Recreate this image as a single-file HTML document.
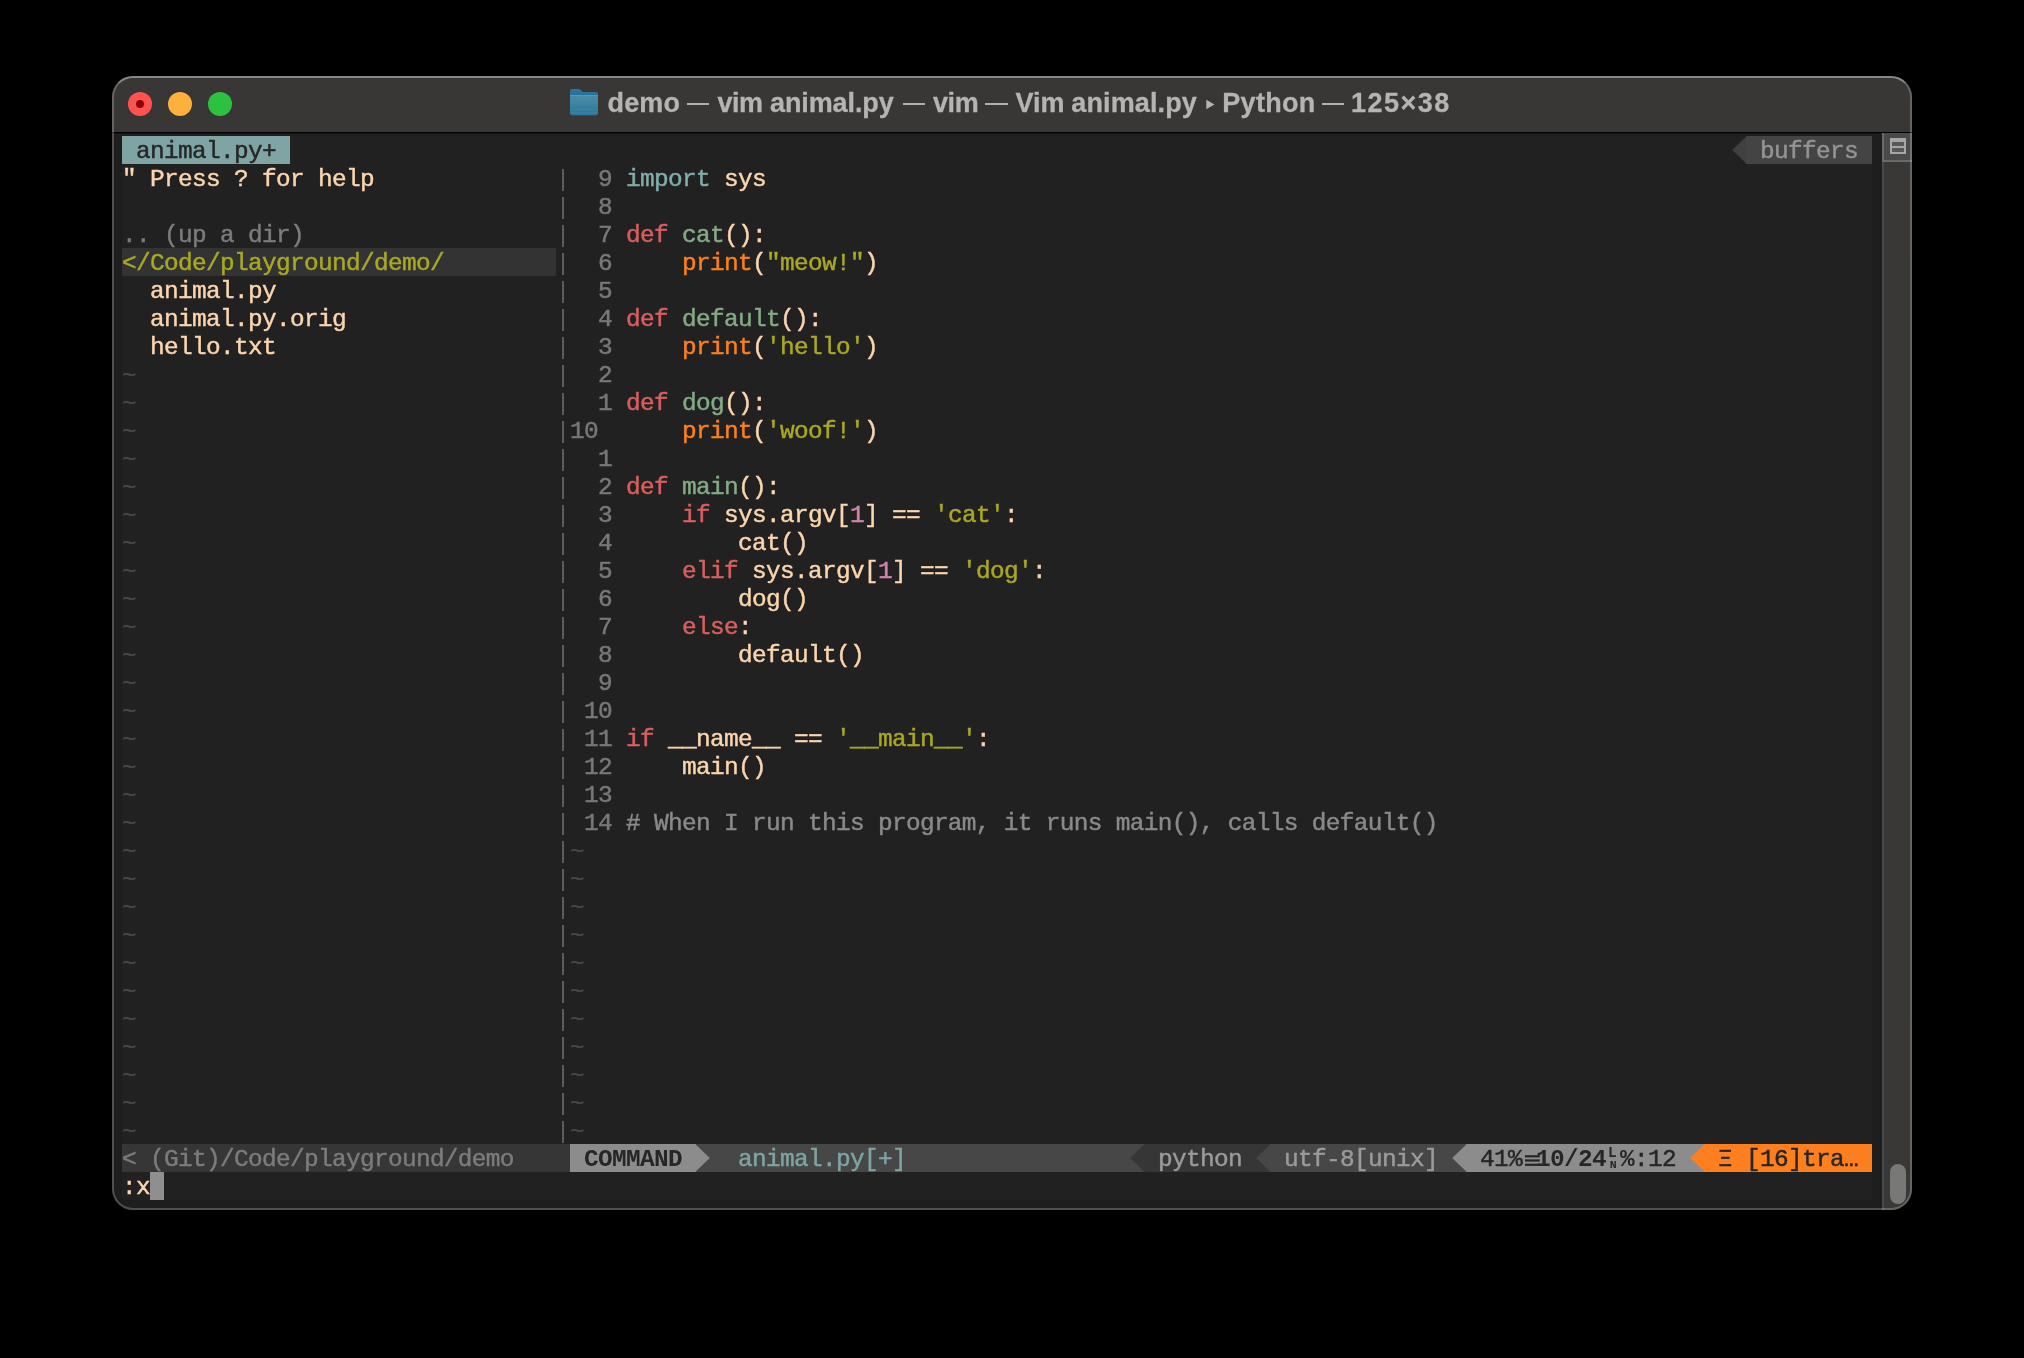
<!DOCTYPE html>
<html><head><meta charset="utf-8"><title>Terminal</title>
<style>
html,body{margin:0;padding:0;background:#000;}
body{width:2024px;height:1358px;position:relative;overflow:hidden;font-family:"Liberation Sans",sans-serif;}
#win{position:absolute;left:112px;top:76px;width:1800px;height:1134px;border-radius:21px;background:#1e1e1e;overflow:hidden;}
#frame{position:absolute;left:112px;top:76px;width:1796px;height:1130px;border-radius:21px;border:2px solid rgba(255,255,255,0.225);border-top-color:rgba(255,255,255,0.40);pointer-events:none;}
#tbar{position:absolute;left:0;top:0;width:1800px;height:56px;background:#383736;}
#tline{position:absolute;left:0;top:56px;width:1800px;height:1px;background:#000;border-bottom:1px solid #161616;}
.tl{position:absolute;top:16px;width:24px;height:24px;border-radius:50%;}
#title{position:absolute;left:0;top:0;width:2024px;height:134px;will-change:transform;font-weight:bold;font-size:27px;line-height:32px;color:#b5b4b2;}
.tw{position:absolute;top:87.0px;white-space:pre;-webkit-text-stroke:0.3px #b5b4b2;}
#grid{position:absolute;left:122px;top:136px;width:1750px;height:1064px;background:#212121;}
#gridt{position:absolute;left:122px;top:136px;width:1750px;height:1064px;will-change:transform;font-family:"Liberation Mono",monospace;font-size:24.4px;line-height:28px;letter-spacing:-0.6424px;}
.b{position:absolute;display:block;}
.t{-webkit-text-stroke:0.45px currentColor;position:absolute;white-space:pre;height:28px;margin-top:1.7px;font-style:normal;}
.s{position:absolute;font-family:"Liberation Mono",monospace;font-weight:bold;font-size:12px;line-height:14px;letter-spacing:0;}
#sbar{position:absolute;left:1770px;top:57px;width:30px;height:1077px;background:#393837;}
#sbar:before{content:"";position:absolute;left:0;top:0;width:1.5px;height:100%;background:#4a4948;}
#split{position:absolute;left:0;top:0;width:30px;height:29px;background:#4a4a4a;border-bottom:2px solid #6a6a6a;border-left:2px solid #6a6a6a;box-sizing:border-box;}
#thumb{position:absolute;left:8px;top:1031px;width:16px;height:40px;border-radius:8px;background:#787876;}
</style></head>
<body>
<div id="win">
  <div id="tbar"></div>
  <div id="tline"></div>
  <i class="tl" style="left:16px;background:#ff5350"></i>
  <i class="b" style="left:24px;top:24px;width:8px;height:8px;border-radius:50%;background:#8c0008"></i>
  <i class="tl" style="left:56px;background:#fdb03b"></i>
  <i class="tl" style="left:96px;background:#2dc140"></i>
  <svg class="b" style="left:458px;top:12px" width="28" height="28" viewBox="0 0 28 28">
    <defs><linearGradient id="ff" x1="0" y1="0" x2="0" y2="1"><stop offset="0" stop-color="#4c8ca7"/><stop offset="0.45" stop-color="#3f84a3"/><stop offset="1" stop-color="#2a769a"/></linearGradient>
    <linearGradient id="fb" x1="0" y1="0" x2="0" y2="1"><stop offset="0" stop-color="#2677a2"/><stop offset="1" stop-color="#1a638e"/></linearGradient></defs>
    <path d="M0 3.2 Q0 1 2.2 1 H8.6 Q9.6 1 10.4 1.7 L12.2 3.4 Q12.9 4 14 4 H25.8 Q28 4 28 6.2 V25 Q28 27.2 25.8 27.2 H2.2 Q0 27.2 0 25 Z" fill="url(#fb)"/>
    <path d="M0 7 H28 V25 Q28 27.2 25.8 27.2 H2.2 Q0 27.2 0 25 Z" fill="url(#ff)"/>
    <rect x="0.6" y="7" width="26.8" height="0.9" fill="#5d9db3" opacity="0.8"/>
    <rect x="0" y="21.3" width="28" height="0.9" fill="#4a8eaa" opacity="0.55"/>
    <rect x="0" y="24.4" width="28" height="0.9" fill="#4a8eaa" opacity="0.55"/>
  </svg>
  <div id="sbar">
    <div id="split">
      <svg class="b" style="left:6px;top:5px" width="16" height="16" viewBox="0 0 16 16"><rect x="1" y="1" width="14" height="14" fill="#585858"/><path fill="#a6a6a6" fill-rule="evenodd" d="M0 0H16V16H0Z M2 4H14V8H2Z M2 10H14V14H2Z"/></svg>
    </div>
    <div id="thumb"></div>
  </div>
</div>
<div id="frame"></div>
<div id="title">
<span class="tw" style="left:607.6px;letter-spacing:0.12px">demo</span>
<span class="tw" style="left:717.6px;letter-spacing:-0.6px">vim</span>
<span class="tw" style="left:770px;letter-spacing:-0.1px">animal.py</span>
<span class="tw" style="left:933px;letter-spacing:-0.4px">vim</span>
<span class="tw" style="left:1015.5px;letter-spacing:0.0px">Vim</span>
<span class="tw" style="left:1071.3px;letter-spacing:0.12px">animal.py</span>
<span class="tw" style="left:1222.3px;letter-spacing:0.3px">Python</span>
<span class="tw" style="left:1351px;letter-spacing:1.5px">125×38</span>
<i class="b" style="left:687.2px;top:102.5px;width:22.3px;height:2.9px;background:#b1b0ae"></i>
<i class="b" style="left:902.9px;top:102.5px;width:22.2px;height:2.9px;background:#b1b0ae"></i>
<i class="b" style="left:985.4px;top:102.5px;width:22.2px;height:2.9px;background:#b1b0ae"></i>
<i class="b" style="left:1321.9px;top:102.5px;width:22.0px;height:2.9px;background:#b1b0ae"></i>
<svg class="b" style="left:1206px;top:99px" width="10" height="11" viewBox="0 0 10 11"><polygon points="0.3,0.8 8.4,5.5 0.3,10.2" fill="#b5b4b2"/></svg>
</div>
<div id="grid">
<i class="b" style="left:0px;top:0px;width:168px;height:28px;background:#7ea5a4"></i>
<svg class="b" style="left:1610px;top:0px" width="14" height="28" viewBox="0 0 14 28"><polygon points="14,0.7 14,27.3 0.2,14.0" fill="#404040"/></svg>
<i class="b" style="left:1624px;top:0px;width:126px;height:28px;background:#444444"></i>
<i class="b" style="left:0px;top:112px;width:434px;height:28px;background:#333333"></i>
<i class="b" style="left:440px;top:33px;width:2px;height:22px;background:#5c5c5c"></i>
<i class="b" style="left:440px;top:61px;width:2px;height:22px;background:#5c5c5c"></i>
<i class="b" style="left:440px;top:89px;width:2px;height:22px;background:#5c5c5c"></i>
<i class="b" style="left:440px;top:117px;width:2px;height:22px;background:#5c5c5c"></i>
<i class="b" style="left:440px;top:145px;width:2px;height:22px;background:#5c5c5c"></i>
<i class="b" style="left:440px;top:173px;width:2px;height:22px;background:#5c5c5c"></i>
<i class="b" style="left:440px;top:201px;width:2px;height:22px;background:#5c5c5c"></i>
<i class="b" style="left:440px;top:229px;width:2px;height:22px;background:#5c5c5c"></i>
<i class="b" style="left:440px;top:257px;width:2px;height:22px;background:#5c5c5c"></i>
<i class="b" style="left:440px;top:285px;width:2px;height:22px;background:#5c5c5c"></i>
<i class="b" style="left:440px;top:313px;width:2px;height:22px;background:#5c5c5c"></i>
<i class="b" style="left:440px;top:341px;width:2px;height:22px;background:#5c5c5c"></i>
<i class="b" style="left:440px;top:369px;width:2px;height:22px;background:#5c5c5c"></i>
<i class="b" style="left:440px;top:397px;width:2px;height:22px;background:#5c5c5c"></i>
<i class="b" style="left:440px;top:425px;width:2px;height:22px;background:#5c5c5c"></i>
<i class="b" style="left:440px;top:453px;width:2px;height:22px;background:#5c5c5c"></i>
<i class="b" style="left:440px;top:481px;width:2px;height:22px;background:#5c5c5c"></i>
<i class="b" style="left:440px;top:509px;width:2px;height:22px;background:#5c5c5c"></i>
<i class="b" style="left:440px;top:537px;width:2px;height:22px;background:#5c5c5c"></i>
<i class="b" style="left:440px;top:565px;width:2px;height:22px;background:#5c5c5c"></i>
<i class="b" style="left:440px;top:593px;width:2px;height:22px;background:#5c5c5c"></i>
<i class="b" style="left:440px;top:621px;width:2px;height:22px;background:#5c5c5c"></i>
<i class="b" style="left:440px;top:649px;width:2px;height:22px;background:#5c5c5c"></i>
<i class="b" style="left:440px;top:677px;width:2px;height:22px;background:#5c5c5c"></i>
<i class="b" style="left:440px;top:705px;width:2px;height:22px;background:#5c5c5c"></i>
<i class="b" style="left:440px;top:733px;width:2px;height:22px;background:#5c5c5c"></i>
<i class="b" style="left:440px;top:761px;width:2px;height:22px;background:#5c5c5c"></i>
<i class="b" style="left:440px;top:789px;width:2px;height:22px;background:#5c5c5c"></i>
<i class="b" style="left:440px;top:817px;width:2px;height:22px;background:#5c5c5c"></i>
<i class="b" style="left:440px;top:845px;width:2px;height:22px;background:#5c5c5c"></i>
<i class="b" style="left:440px;top:873px;width:2px;height:22px;background:#5c5c5c"></i>
<i class="b" style="left:440px;top:901px;width:2px;height:22px;background:#5c5c5c"></i>
<i class="b" style="left:440px;top:929px;width:2px;height:22px;background:#5c5c5c"></i>
<i class="b" style="left:440px;top:957px;width:2px;height:22px;background:#5c5c5c"></i>
<i class="b" style="left:440px;top:985px;width:2px;height:22px;background:#5c5c5c"></i>
<i class="b" style="left:0px;top:1008px;width:448px;height:28px;background:#363636"></i>
<i class="b" style="left:448px;top:1008px;width:126px;height:28px;background:#8c8c8c"></i>
<i class="b" style="left:574px;top:1008px;width:448px;height:28px;background:#474747"></i>
<svg class="b" style="left:574px;top:1008px" width="14" height="28" viewBox="0 0 14 28"><polygon points="0,0.7 0,27.3 13.8,14.0" fill="#8c8c8c"/></svg>
<svg class="b" style="left:1008px;top:1008px" width="14" height="28" viewBox="0 0 14 28"><polygon points="14,0.7 14,27.3 0.2,14.0" fill="#363636"/></svg>
<i class="b" style="left:1022px;top:1008px;width:126px;height:28px;background:#363636"></i>
<svg class="b" style="left:1134px;top:1008px" width="14" height="28" viewBox="0 0 14 28"><polygon points="14,0.7 14,27.3 0.2,14.0" fill="#474747"/></svg>
<i class="b" style="left:1148px;top:1008px;width:196px;height:28px;background:#474747"></i>
<svg class="b" style="left:1330px;top:1008px" width="14" height="28" viewBox="0 0 14 28"><polygon points="14,0.7 14,27.3 0.2,14.0" fill="#8c8c8c"/></svg>
<i class="b" style="left:1344px;top:1008px;width:238px;height:28px;background:#8c8c8c"></i>
<svg class="b" style="left:1403px;top:1008px" width="16" height="28" viewBox="0 0 16 28"><g fill="#262626"><rect x="0" y="11.2" width="14.8" height="2.2"/><rect x="0" y="15.4" width="14.8" height="2.2"/><rect x="0" y="19.7" width="14.8" height="2.2"/></g></svg>
<svg class="b" style="left:1568px;top:1008px" width="14" height="28" viewBox="0 0 14 28"><polygon points="14,0.7 14,27.3 0.2,14.0" fill="#fd7f20"/></svg>
<i class="b" style="left:1582px;top:1008px;width:168px;height:28px;background:#fd7f20"></i>
<i class="b" style="left:28px;top:1036px;width:14px;height:28px;background:#8f8f8f"></i>
</div>
<div id="gridt">
<span class="t" style="left:0px;top:0px;color:#262626"> animal.py+ </span>
<span class="t" style="left:1624px;top:0px;color:#949494"> buffers </span>
<span class="t" style="left:0px;top:28px;color:#fbd5ae">&quot; Press ? for help</span>
<span class="t" style="left:0px;top:84px;color:#7c7c7c">.. (up a dir)</span>
<span class="t" style="left:0px;top:112px;color:#a9a824">&lt;/Code/playground/demo/</span>
<span class="t" style="left:28px;top:140px;color:#fbd5ae">animal.py</span>
<span class="t" style="left:28px;top:168px;color:#fbd5ae">animal.py.orig</span>
<span class="t" style="left:28px;top:196px;color:#fbd5ae">hello.txt</span>
<span class="t" style="left:0px;top:224px;color:#4b4b4b;margin-top:3.2px;-webkit-text-stroke:0.15px">~</span>
<span class="t" style="left:0px;top:252px;color:#4b4b4b;margin-top:3.2px;-webkit-text-stroke:0.15px">~</span>
<span class="t" style="left:0px;top:280px;color:#4b4b4b;margin-top:3.2px;-webkit-text-stroke:0.15px">~</span>
<span class="t" style="left:0px;top:308px;color:#4b4b4b;margin-top:3.2px;-webkit-text-stroke:0.15px">~</span>
<span class="t" style="left:0px;top:336px;color:#4b4b4b;margin-top:3.2px;-webkit-text-stroke:0.15px">~</span>
<span class="t" style="left:0px;top:364px;color:#4b4b4b;margin-top:3.2px;-webkit-text-stroke:0.15px">~</span>
<span class="t" style="left:0px;top:392px;color:#4b4b4b;margin-top:3.2px;-webkit-text-stroke:0.15px">~</span>
<span class="t" style="left:0px;top:420px;color:#4b4b4b;margin-top:3.2px;-webkit-text-stroke:0.15px">~</span>
<span class="t" style="left:0px;top:448px;color:#4b4b4b;margin-top:3.2px;-webkit-text-stroke:0.15px">~</span>
<span class="t" style="left:0px;top:476px;color:#4b4b4b;margin-top:3.2px;-webkit-text-stroke:0.15px">~</span>
<span class="t" style="left:0px;top:504px;color:#4b4b4b;margin-top:3.2px;-webkit-text-stroke:0.15px">~</span>
<span class="t" style="left:0px;top:532px;color:#4b4b4b;margin-top:3.2px;-webkit-text-stroke:0.15px">~</span>
<span class="t" style="left:0px;top:560px;color:#4b4b4b;margin-top:3.2px;-webkit-text-stroke:0.15px">~</span>
<span class="t" style="left:0px;top:588px;color:#4b4b4b;margin-top:3.2px;-webkit-text-stroke:0.15px">~</span>
<span class="t" style="left:0px;top:616px;color:#4b4b4b;margin-top:3.2px;-webkit-text-stroke:0.15px">~</span>
<span class="t" style="left:0px;top:644px;color:#4b4b4b;margin-top:3.2px;-webkit-text-stroke:0.15px">~</span>
<span class="t" style="left:0px;top:672px;color:#4b4b4b;margin-top:3.2px;-webkit-text-stroke:0.15px">~</span>
<span class="t" style="left:0px;top:700px;color:#4b4b4b;margin-top:3.2px;-webkit-text-stroke:0.15px">~</span>
<span class="t" style="left:0px;top:728px;color:#4b4b4b;margin-top:3.2px;-webkit-text-stroke:0.15px">~</span>
<span class="t" style="left:0px;top:756px;color:#4b4b4b;margin-top:3.2px;-webkit-text-stroke:0.15px">~</span>
<span class="t" style="left:0px;top:784px;color:#4b4b4b;margin-top:3.2px;-webkit-text-stroke:0.15px">~</span>
<span class="t" style="left:0px;top:812px;color:#4b4b4b;margin-top:3.2px;-webkit-text-stroke:0.15px">~</span>
<span class="t" style="left:0px;top:840px;color:#4b4b4b;margin-top:3.2px;-webkit-text-stroke:0.15px">~</span>
<span class="t" style="left:0px;top:868px;color:#4b4b4b;margin-top:3.2px;-webkit-text-stroke:0.15px">~</span>
<span class="t" style="left:0px;top:896px;color:#4b4b4b;margin-top:3.2px;-webkit-text-stroke:0.15px">~</span>
<span class="t" style="left:0px;top:924px;color:#4b4b4b;margin-top:3.2px;-webkit-text-stroke:0.15px">~</span>
<span class="t" style="left:0px;top:952px;color:#4b4b4b;margin-top:3.2px;-webkit-text-stroke:0.15px">~</span>
<span class="t" style="left:0px;top:980px;color:#4b4b4b;margin-top:3.2px;-webkit-text-stroke:0.15px">~</span>
<span class="t" style="left:462px;top:28px;color:#787878"> 9</span>
<span class="t" style="left:504px;top:28px;color:#83acab">import</span>
<span class="t" style="left:602px;top:28px;color:#fbd5ae">sys</span>
<span class="t" style="left:462px;top:56px;color:#787878"> 8</span>
<span class="t" style="left:462px;top:84px;color:#787878"> 7</span>
<span class="t" style="left:504px;top:84px;color:#d95f5e">def</span>
<span class="t" style="left:560px;top:84px;color:#84ab84">cat</span>
<span class="t" style="left:602px;top:84px;color:#fbd5ae">():</span>
<span class="t" style="left:462px;top:112px;color:#787878"> 6</span>
<span class="t" style="left:560px;top:112px;color:#fb801d">print</span>
<span class="t" style="left:630px;top:112px;color:#fbd5ae">(</span>
<span class="t" style="left:644px;top:112px;color:#a9a824">&quot;meow!&quot;</span>
<span class="t" style="left:742px;top:112px;color:#fbd5ae">)</span>
<span class="t" style="left:462px;top:140px;color:#787878"> 5</span>
<span class="t" style="left:462px;top:168px;color:#787878"> 4</span>
<span class="t" style="left:504px;top:168px;color:#d95f5e">def</span>
<span class="t" style="left:560px;top:168px;color:#84ab84">default</span>
<span class="t" style="left:658px;top:168px;color:#fbd5ae">():</span>
<span class="t" style="left:462px;top:196px;color:#787878"> 3</span>
<span class="t" style="left:560px;top:196px;color:#fb801d">print</span>
<span class="t" style="left:630px;top:196px;color:#fbd5ae">(</span>
<span class="t" style="left:644px;top:196px;color:#a9a824">&#x27;hello&#x27;</span>
<span class="t" style="left:742px;top:196px;color:#fbd5ae">)</span>
<span class="t" style="left:462px;top:224px;color:#787878"> 2</span>
<span class="t" style="left:462px;top:252px;color:#787878"> 1</span>
<span class="t" style="left:504px;top:252px;color:#d95f5e">def</span>
<span class="t" style="left:560px;top:252px;color:#84ab84">dog</span>
<span class="t" style="left:602px;top:252px;color:#fbd5ae">():</span>
<span class="t" style="left:448px;top:280px;color:#787878">10</span>
<span class="t" style="left:560px;top:280px;color:#fb801d">print</span>
<span class="t" style="left:630px;top:280px;color:#fbd5ae">(</span>
<span class="t" style="left:644px;top:280px;color:#a9a824">&#x27;woof!&#x27;</span>
<span class="t" style="left:742px;top:280px;color:#fbd5ae">)</span>
<span class="t" style="left:462px;top:308px;color:#787878"> 1</span>
<span class="t" style="left:462px;top:336px;color:#787878"> 2</span>
<span class="t" style="left:504px;top:336px;color:#d95f5e">def</span>
<span class="t" style="left:560px;top:336px;color:#84ab84">main</span>
<span class="t" style="left:616px;top:336px;color:#fbd5ae">():</span>
<span class="t" style="left:462px;top:364px;color:#787878"> 3</span>
<span class="t" style="left:560px;top:364px;color:#d95f5e">if</span>
<span class="t" style="left:602px;top:364px;color:#fbd5ae">sys.argv[</span>
<span class="t" style="left:728px;top:364px;color:#cf85ac">1</span>
<span class="t" style="left:742px;top:364px;color:#fbd5ae">] ==</span>
<span class="t" style="left:812px;top:364px;color:#a9a824">&#x27;cat&#x27;</span>
<span class="t" style="left:882px;top:364px;color:#fbd5ae">:</span>
<span class="t" style="left:462px;top:392px;color:#787878"> 4</span>
<span class="t" style="left:616px;top:392px;color:#fbd5ae">cat()</span>
<span class="t" style="left:462px;top:420px;color:#787878"> 5</span>
<span class="t" style="left:560px;top:420px;color:#d95f5e">elif</span>
<span class="t" style="left:630px;top:420px;color:#fbd5ae">sys.argv[</span>
<span class="t" style="left:756px;top:420px;color:#cf85ac">1</span>
<span class="t" style="left:770px;top:420px;color:#fbd5ae">] ==</span>
<span class="t" style="left:840px;top:420px;color:#a9a824">&#x27;dog&#x27;</span>
<span class="t" style="left:910px;top:420px;color:#fbd5ae">:</span>
<span class="t" style="left:462px;top:448px;color:#787878"> 6</span>
<span class="t" style="left:616px;top:448px;color:#fbd5ae">dog()</span>
<span class="t" style="left:462px;top:476px;color:#787878"> 7</span>
<span class="t" style="left:560px;top:476px;color:#d95f5e">else</span>
<span class="t" style="left:616px;top:476px;color:#fbd5ae">:</span>
<span class="t" style="left:462px;top:504px;color:#787878"> 8</span>
<span class="t" style="left:616px;top:504px;color:#fbd5ae">default()</span>
<span class="t" style="left:462px;top:532px;color:#787878"> 9</span>
<span class="t" style="left:462px;top:560px;color:#787878">10</span>
<span class="t" style="left:462px;top:588px;color:#787878">11</span>
<span class="t" style="left:504px;top:588px;color:#d95f5e">if</span>
<span class="t" style="left:546px;top:588px;color:#fbd5ae">__name__ ==</span>
<span class="t" style="left:714px;top:588px;color:#a9a824">&#x27;__main__&#x27;</span>
<span class="t" style="left:854px;top:588px;color:#fbd5ae">:</span>
<span class="t" style="left:462px;top:616px;color:#787878">12</span>
<span class="t" style="left:560px;top:616px;color:#fbd5ae">main()</span>
<span class="t" style="left:462px;top:644px;color:#787878">13</span>
<span class="t" style="left:462px;top:672px;color:#787878">14</span>
<span class="t" style="left:504px;top:672px;color:#8a8a8a"># When I run this program, it runs main(), calls default()</span>
<span class="t" style="left:448px;top:700px;color:#4b4b4b;margin-top:3.2px;-webkit-text-stroke:0.15px">~</span>
<span class="t" style="left:448px;top:728px;color:#4b4b4b;margin-top:3.2px;-webkit-text-stroke:0.15px">~</span>
<span class="t" style="left:448px;top:756px;color:#4b4b4b;margin-top:3.2px;-webkit-text-stroke:0.15px">~</span>
<span class="t" style="left:448px;top:784px;color:#4b4b4b;margin-top:3.2px;-webkit-text-stroke:0.15px">~</span>
<span class="t" style="left:448px;top:812px;color:#4b4b4b;margin-top:3.2px;-webkit-text-stroke:0.15px">~</span>
<span class="t" style="left:448px;top:840px;color:#4b4b4b;margin-top:3.2px;-webkit-text-stroke:0.15px">~</span>
<span class="t" style="left:448px;top:868px;color:#4b4b4b;margin-top:3.2px;-webkit-text-stroke:0.15px">~</span>
<span class="t" style="left:448px;top:896px;color:#4b4b4b;margin-top:3.2px;-webkit-text-stroke:0.15px">~</span>
<span class="t" style="left:448px;top:924px;color:#4b4b4b;margin-top:3.2px;-webkit-text-stroke:0.15px">~</span>
<span class="t" style="left:448px;top:952px;color:#4b4b4b;margin-top:3.2px;-webkit-text-stroke:0.15px">~</span>
<span class="t" style="left:448px;top:980px;color:#4b4b4b;margin-top:3.2px;-webkit-text-stroke:0.15px">~</span>
<span class="t" style="left:0px;top:1008px;color:#7c7c7c">&lt; (Git)/Code/playground/demo</span>
<span class="t" style="left:448px;top:1008px;color:#262626;font-weight:bold;-webkit-text-stroke:0"> COMMAND </span>
<span class="t" style="left:602px;top:1008px;color:#7ea5a4"> animal.py[+]</span>
<span class="t" style="left:1022px;top:1008px;color:#9b9b9b"> python </span>
<span class="t" style="left:1148px;top:1008px;color:#9b9b9b"> utf-8[unix] </span>
<span class="t" style="left:1344px;top:1008px;color:#262626"> 41%</span>
<span class="t" style="left:1414px;top:1008px;color:#262626;font-weight:bold;-webkit-text-stroke:0">10/24</span>
<span class="s" style="left:1486px;top:1009.7px;font-size:14.5px;color:#262626">L</span>
<span class="s" style="left:1487.7px;top:1021.6px;font-size:11.5px;color:#262626">N</span>
<span class="t" style="left:1498px;top:1008px;color:#262626;font-weight:bold;-webkit-text-stroke:0">%</span>
<span class="t" style="left:1512px;top:1008px;color:#262626">:12 </span>
<span class="t" style="left:1582px;top:1008px;color:#262626"> Ξ [16]tra…</span>
<span class="t" style="left:0px;top:1036px;color:#fbd5ae">:x</span>
</div>
</body></html>
